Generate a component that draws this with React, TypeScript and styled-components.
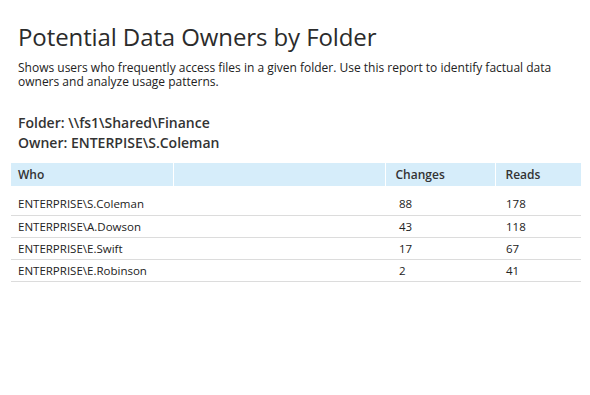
import React from "react";
import styled, { createGlobalStyle } from "styled-components";

const Global = createGlobalStyle`
  html, body { margin: 0; padding: 0; background: #fff; }
  body { font-family: "Open Sans", "Noto Sans", sans-serif; color: #222; }
`;

const Page = styled.div`
  width: 590px;
  height: 395px;
  box-sizing: border-box;
  padding: 21px 9px 0 11px;
`;

const Head = styled.div`
  padding-left: 7px;
`;

const Title = styled.h1`
  margin: 0;
  font-size: 24px;
  font-weight: 400;
  letter-spacing: -0.1px;
  line-height: 32px;
  color: #2b2b2b;
`;

const Desc = styled.p`
  margin: 8px 0 0;
  font-size: 12px;
  line-height: 14px;
  color: #222;
  width: 550px;
`;

const Meta = styled.div`
  margin-top: 24px;
  font-size: 14px;
  font-weight: 600;
  line-height: 20px;
  color: #333;
`;

const Table = styled.table`
  margin-top: 10px;
  width: 570px;
  border-collapse: collapse;
  font-size: 11.5px;
`;

const Th = styled.th<{ $w: number; $pad: number }>`
  width: ${(p) => p.$w}px;
  height: 23px;
  padding: 0 0 0 ${(p) => p.$pad}px;
  text-align: left;
  background: #d6edfa;
  border-left: 1px solid #fff;
  font-size: 12px;
  font-weight: 600;
  color: #333;
  box-sizing: border-box;
  &:first-child { border-left: none; }
`;

const Tr = styled.tr<{ $first?: boolean }>`
  border-bottom: 1px solid #dcdcdc;
  td { height: ${(p) => (p.$first ? 29 : 22)}px; padding-top: ${(p) => (p.$first ? 6 : 0)}px; }
`;

const Td = styled.td<{ $pad: number }>`
  padding: 0 0 0 ${(p) => p.$pad}px;
  box-sizing: border-box;
  color: #222;
  vertical-align: middle;
`;

const rows = [
  ["ENTERPRISE\\S.Coleman", "88", "178"],
  ["ENTERPRISE\\A.Dowson", "43", "118"],
  ["ENTERPRISE\\E.Swift", "17", "67"],
  ["ENTERPRISE\\E.Robinson", "2", "41"],
];

export default function App() {
  return (
    <>
      <Global />
      <Page>
        <Head>
          <Title>Potential Data Owners by Folder</Title>
          <Desc>
            Shows users who frequently access files in a given folder. Use this report to identify factual data owners and analyze usage patterns.
          </Desc>
          <Meta>
            Folder: \\fs1\Shared\Finance
            <br />
            Owner: ENTERPISE\S.Coleman
          </Meta>
        </Head>
        <Table>
          <thead>
            <tr>
              <Th $w={162} $pad={7}>Who</Th>
              <Th $w={212} $pad={10}></Th>
              <Th $w={110} $pad={10}>Changes</Th>
              <Th $w={86} $pad={10}>Reads</Th>
            </tr>
          </thead>
          <tbody>
            {rows.map((r, i) => (
              <Tr key={i} $first={i === 0}>
                <Td $pad={7} colSpan={2}>{r[0]}</Td>
                <Td $pad={14}>{r[1]}</Td>
                <Td $pad={11}>{r[2]}</Td>
              </Tr>
            ))}
          </tbody>
        </Table>
      </Page>
    </>
  );
}
